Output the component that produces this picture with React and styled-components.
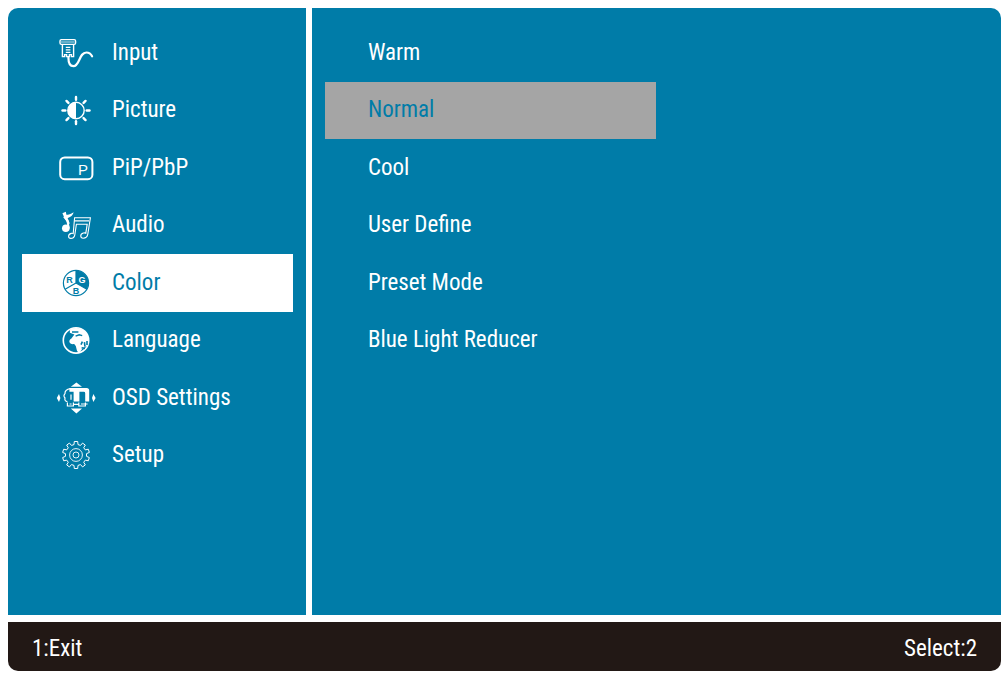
import { useState } from 'react'
import styled, { createGlobalStyle } from 'styled-components'

const BLUE = '#007ca8'

const GlobalStyle = createGlobalStyle`
	* {
		box-sizing: border-box;
	}
	body {
		margin: 0;
		background: white;
		font-family: "Roboto Condensed", Roboto, "Liberation Sans", sans-serif;
	}
`

const StyledScreen = styled.div`
	display: flex;
	flex-direction: column;
	gap: 7px;
	min-height: 100vh;
	padding: 8px 3px 2px 8px;
`

const StyledPanels = styled.div`
	flex: 1;
	display: flex;
	gap: 6px;
	border-radius: 10px 10px 0 0;
	overflow: hidden;
`

const StyledNav = styled.nav`
	flex: 0 0 30%;
	padding: 16px 13px 16px 14px;
	background: ${ BLUE };
`

const StyledMain = styled.main`
	flex: 1;
	padding: 16px 13px;
	background: ${ BLUE };
`

const StyledList = styled.ul`
	display: grid;
	grid-template-rows: repeat(8, 1fr);
	height: 460px;
	margin: 0;
	padding: 0;
	list-style: none;
`

const StyledItem = styled.button`
	display: flex;
	align-items: center;
	gap: 16px;
	width: 100%;
	height: 100%;
	padding: 0 0 0 34px;
	border: none;
	background: ${ ({ $active }) => $active ? 'white' : 'transparent' };
	color: ${ ({ $active }) => $active ? BLUE : 'white' };
	font-family: inherit;
	font-size: 23px;
	line-height: 28px;
	text-align: left;
	white-space: nowrap;
	cursor: pointer;
	& > svg {
		flex: none;
		width: 40px;
		height: 40px;
	}
`

const StyledOption = styled(StyledItem)`
	width: 50%;
	padding-left: 43px;
	background: ${ ({ $active }) => $active ? '#a5a5a5' : 'transparent' };
`

const StyledFooter = styled.footer`
	display: flex;
	align-items: center;
	justify-content: space-between;
	height: 49px;
	padding: 4px 24px 0;
	border-radius: 0 0 10px 10px;
	background: #221815;
	color: white;
	font-size: 23px;
	line-height: 28px;
`

function Icon ({ children }) {
	return (
		<svg viewBox="0 0 40 40" fill="none" stroke="currentColor" strokeWidth="1.2" aria-hidden="true">
			{ children }
		</svg>
	)
}

function InputIcon () {
	return (
		<Icon>
			<rect x="4" y="6.6" width="15.6" height="4.8" rx="1.4" strokeWidth="1.4" />
			<path d="M5 9h13.600" strokeWidth="0.800" />
			<path d="M6.400 11.400v12.200h2.200v-2h2v2h2.800v-2h2v2h2.200V11.400" strokeWidth="1.400" />
			<path d="M9.800 14.400h4.600M9.800 16.900h4.600M9.800 19.400h4.600" />
			<path d="M12.400 24.500c0 5.800 1.500 8.700 5 8.700c6.500 0 5.500-13.700 13-13.700c3 0 4.500 1.500 5.700 3.800" strokeWidth="2.200" strokeLinecap="round" />
		</Icon>
	)
}

function PictureIcon () {
	const angles = [0, 45, 90, 135, 180, 225, 270, 315]
	return (
		<Icon>
			<circle cx="20" cy="20.500" r="8.200" strokeWidth="1.400" />
			<path d="M20 12.300a8.200 8.200 0 0 0 0 16.400z" fill="currentColor" stroke="none" />
			{ angles.map(angle => (
				<path key={ angle } d="M20 9.800V7" strokeWidth="2.400" strokeLinecap="round" transform={ `rotate(${ angle } 20 20.500)` } />
			)) }
		</Icon>
	)
}

function PipIcon () {
	return (
		<Icon>
			<rect x="4.200" y="9.400" width="32.200" height="21.800" rx="4.500" strokeWidth="2" />
			<text x="22" y="27" fontSize="15" fontFamily="Liberation Sans, sans-serif" fill="currentColor" stroke="none">P</text>
		</Icon>
	)
}

function AudioIcon () {
	return (
		<Icon>
			<ellipse cx="9.800" cy="23.200" rx="3.800" ry="3.800" fill="currentColor" stroke="none" />
			<path d="M12.800 23.500L11.400 15.500L8 11.500" strokeWidth="2" />
			<path d="M6.400 8.200l3.400-1.400l.6 3c2-.2 4.200-.6 7.200-2.600c-.8 3.600-3.600 5-6 5.800l2.200 5.400l-1.800.8l-3.600-6.400z" fill="currentColor" stroke="none" />
			<path d="M18.600 12.800h15.800l-2.600 16.400c-.4 2.600-2.200 4-4.600 4c-3 0-3.600-4.200.2-5.200c1-.2 1.800-.2 2.400.2l1.400-9h-10.800l-1.600 10.600c-.4 2.400-2 3.600-4 3.600c-2.800 0-3.200-4 .4-5c.8-.2 1.400-.2 2 .2z" strokeWidth="1.100" />
			<path d="M18.400 15.800h14.600" />
		</Icon>
	)
}

function ColorIcon () {
	return (
		<Icon>
			<circle cx="20" cy="20" r="12.600" strokeWidth="1.200" />
			<path d="M20 20V7.500a12.500 12.500 0 0 1 10.900 18.700z" fill="currentColor" stroke="none" />
			<path d="M20 20L9.100 26.200M20 20V7.400M20 20l10.900 6.200" />
			<g fontSize="9" fontWeight="bold" fontFamily="Liberation Sans, sans-serif" fill="currentColor" stroke="none" textAnchor="middle">
				<text x="13.500" y="19.500">R</text>
				<text x="26" y="19.500" fill="white">G</text>
				<text x="20" y="30.500">B</text>
			</g>
		</Icon>
	)
}

function LanguageIcon () {
	return (
		<Icon>
			<circle cx="20" cy="20.400" r="12.700" strokeWidth="1.600" />
			<path d="M14 9.400c7-3.400 15.400-.8 18 6.600c1 3 .8 6.400-.6 9.400l-5 3.400c-.6 1.200-1.600 2-2.600 3.200c-1.600.8-2.600-.4-3-2l-1-4l-1.600-2c-2 .4-3.600 0-4.600-1.400c-.8-1.600.2-3.200 1.800-4l3-4.200l-4.600-1.600z" fill="currentColor" stroke="none" />
			<path d="M16 12h6.400M19.600 16.200l3.600-1.400l3 .8" stroke={ BLUE } strokeWidth="1.400" />
			<path d="M25 24.600l1.400-3M28.400 22.200l.6 4.400M31 21v4M25.600 27.800l3.400.6" stroke={ BLUE } strokeWidth="1.600" />
		</Icon>
	)
}

function OsdIcon () {
	return (
		<Icon>
			<g fill="currentColor" stroke="none">
				<path d="M20.400 4.600l5.600 4.200h-11.200zM20.400 35.400l5.600-5h-11.200z" />
				<path d="M.8 20l2.200-4l1.400 4l-1.400 4zM39.600 20l-2.200-4l-1.400 4l1.400 4z" />
				<path d="M13.400 10h17.200q2.600 0 2.600 2.600v11h-4v-8.400q0-1.400-1.400-1.400h-4.400v9.800h-5.800v-9.800h-4.200z" />
			</g>
			<path d="M14.400 10.600c-3.600.6-5.600 2.400-5.400 5c-1.400 1.400-1.400 3 0 4.400c-.6 2 .4 3.400 2.400 3.600M15 16.400v5.400" />
			<path d="M11.400 24.400v3.600h6v-3.600M17.400 26.400h5.400M22.800 24.400v3.600h6.600v-3.600M13.600 26h2M25 26h6.600" />
		</Icon>
	)
}

function SetupIcon () {
	const count = 10
	const step = Math.PI * 2 / count
	const points = []
	for (let i = 0; i < count; i++) {
		const corners = [[-0.3, 10.6], [-0.2, 13.6], [0.2, 13.6], [0.3, 10.6]]
		corners.forEach(([offset, radius]) => {
			const angle = (i + offset) * step - Math.PI / 2
			points.push(`${ 20 + radius * Math.cos(angle) },${ 20 + radius * Math.sin(angle) }`)
		})
	}
	return (
		<Icon>
			<polygon points={ points.join(' ') } strokeWidth="1" strokeLinejoin="round" />
			<circle cx="20" cy="20" r="6.400" strokeWidth="0.900" />
			<circle cx="20" cy="20" r="3" strokeWidth="0.900" />
		</Icon>
	)
}

const menu = [
	{ name: 'Input', icon: InputIcon },
	{ name: 'Picture', icon: PictureIcon },
	{ name: 'PiP/PbP', icon: PipIcon },
	{ name: 'Audio', icon: AudioIcon },
	{ name: 'Color', icon: ColorIcon },
	{ name: 'Language', icon: LanguageIcon },
	{ name: 'OSD Settings', icon: OsdIcon },
	{ name: 'Setup', icon: SetupIcon },
]

const options = ['Warm', 'Normal', 'Cool', 'User Define', 'Preset Mode', 'Blue Light Reducer']

function App () {

	const [section, setSection] = useState('Color')
	const [option, setOption] = useState('Normal')

	return (
		<StyledScreen>
			<GlobalStyle />
			<StyledPanels>
				<StyledNav>
					<StyledList>
						{ menu.map(({ name, icon: MenuIcon }) => (
							<li key={ name }>
								<StyledItem
									type="button"
									$active={ name === section }
									onClick={ () => setSection(name) }
								>
									<MenuIcon />
									<span>{ name }</span>
								</StyledItem>
							</li>
						)) }
					</StyledList>
				</StyledNav>
				<StyledMain>
					<StyledList>
						{ options.map(name => (
							<li key={ name }>
								<StyledOption
									type="button"
									$active={ name === option }
									onClick={ () => setOption(name) }
								>
									{ name }
								</StyledOption>
							</li>
						)) }
					</StyledList>
				</StyledMain>
			</StyledPanels>
			<StyledFooter>
				<span>1:Exit</span>
				<span>Select:2</span>
			</StyledFooter>
		</StyledScreen>
	)
}

export default App
